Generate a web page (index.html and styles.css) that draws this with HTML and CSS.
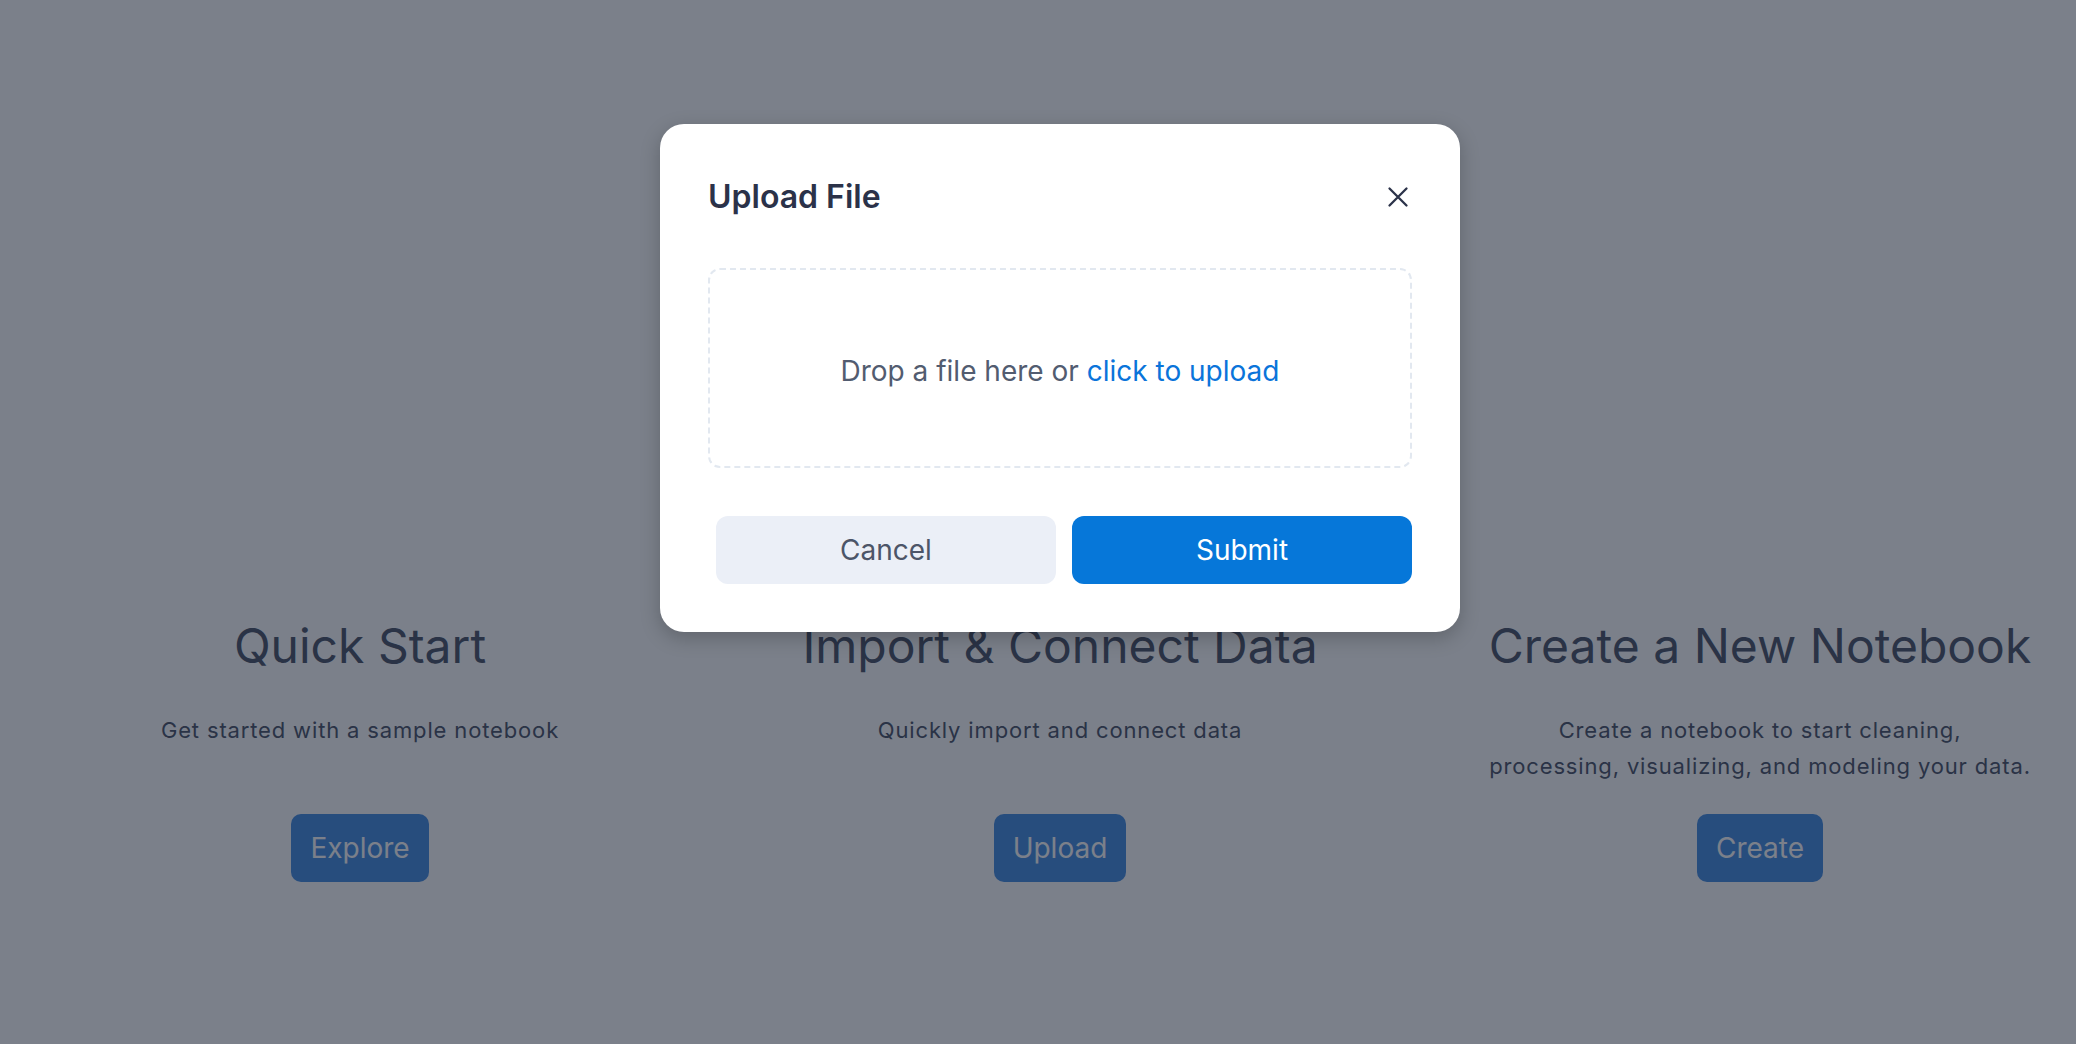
FILE: index.html
```html
<!DOCTYPE html>
<html lang="en">
<head>
<meta charset="utf-8">
<title>Notebooks</title>
<link rel="stylesheet" href="styles.css">
</head>
<body>
<div class="app">
  <main class="home">
    <section class="feature">
      <h2 class="feature-title">Quick Start</h2>
      <p class="feature-desc">Get started with a sample notebook</p>
      <button class="feature-btn" type="button">Explore</button>
    </section>
    <section class="feature">
      <h2 class="feature-title">Import &amp; Connect Data</h2>
      <p class="feature-desc">Quickly import and connect data</p>
      <button class="feature-btn" type="button">Upload</button>
    </section>
    <section class="feature">
      <h2 class="feature-title">Create a New Notebook</h2>
      <p class="feature-desc">Create a notebook to start cleaning,<br>processing, visualizing, and modeling your data.</p>
      <button class="feature-btn" type="button">Create</button>
    </section>
  </main>

  <div class="overlay">
    <div class="dialog" role="dialog" aria-labelledby="dlg-title">
      <div class="dialog-header">
        <h3 class="dialog-title" id="dlg-title">Upload File</h3>
        <button class="dialog-close" type="button" aria-label="Close">
          <svg width="28" height="28" viewBox="0 0 28 28" aria-hidden="true">
            <path d="M5.5 5.5 L22.5 22.5 M22.5 5.5 L5.5 22.5" stroke="#2b3249" stroke-width="2.3" stroke-linecap="round" fill="none"/>
          </svg>
        </button>
      </div>
      <div class="dropzone">
        <span class="drop-text">Drop a file here or <a class="drop-link" href="#">click to upload</a></span>
      </div>
      <div class="dialog-footer">
        <button class="btn btn-cancel" type="button">Cancel</button>
        <button class="btn btn-submit" type="button">Submit</button>
      </div>
    </div>
  </div>
</div>
</body>
</html>
```

FILE: styles.css
```css
* {
  box-sizing: border-box;
}

html, body {
  margin: 0;
  padding: 0;
  background: #ffffff;
  overflow: hidden;
}

body {
  font-family: "Inter", "Liberation Sans", sans-serif;
}

.app {
  position: relative;
  width: 2120px;
  height: 1044px;
}

/* ---------- Background page ---------- */
.home {
  display: grid;
  grid-template-columns: repeat(3, 700px);
  padding: 617px 10px 0;
}

.feature {
  display: flex;
  flex-direction: column;
  align-items: center;
  text-align: center;
}

.feature-title {
  margin: 0;
  font-size: 48px;
  line-height: 57.6px;
  font-weight: 400;
  color: #4d5469;
}

.feature-desc {
  margin: 37px 0 0;
  min-height: 72px;
  font-size: 22px;
  line-height: 36px;
  color: #4d5469;
  letter-spacing: 0.85px;
}

.feature-btn {
  margin-top: 30px;
  height: 68px;
  padding: 0 19px;
  border: 0;
  border-radius: 10px;
  background: #468ee3;
  color: #ffffff;
  font-family: inherit;
  font-size: 28px;
  line-height: 68px;
}

/* ---------- Overlay + dialog ---------- */
.overlay {
  position: absolute;
  inset: 0;
  background: rgba(15, 23, 42, 0.55);
  display: flex;
  justify-content: center;
  align-items: flex-start;
  padding-top: 124px;
}

.dialog {
  width: 800px;
  background: #ffffff;
  border-radius: 24px;
  padding: 53px 48px 48px;
  box-shadow: 0 6px 20px rgba(0, 0, 0, 0.22);
}

.dialog-header {
  display: flex;
  align-items: center;
  justify-content: space-between;
  height: 40px;
}

.dialog-title {
  margin: 0;
  font-size: 32px;
  line-height: 40px;
  font-weight: 600;
  color: #2b3249;
}

.dialog-close {
  width: 28px;
  height: 28px;
  padding: 0;
  border: 0;
  background: none;
  display: flex;
}

.dropzone {
  margin-top: 51px;
  height: 200px;
  padding-top: 5px;
  border: 2px dashed #e2e8f0;
  border-radius: 12px;
  display: flex;
  align-items: center;
  justify-content: center;
}

.drop-text {
  font-size: 28px;
  line-height: 36px;
  color: #525c70;
}

.drop-link {
  color: #0a74da;
  text-decoration: none;
}

.dialog-footer {
  margin-top: 48px;
  padding-left: 8px;
  display: flex;
  gap: 16px;
}

.btn {
  flex: 1;
  height: 68px;
  border: 0;
  border-radius: 12px;
  font-family: inherit;
  font-size: 28px;
  line-height: 68px;
  padding: 0;
}

.btn-cancel {
  background: #ebeff7;
  color: #4c5568;
}

.btn-submit {
  background: #0677d9;
  color: #ffffff;
}
```
